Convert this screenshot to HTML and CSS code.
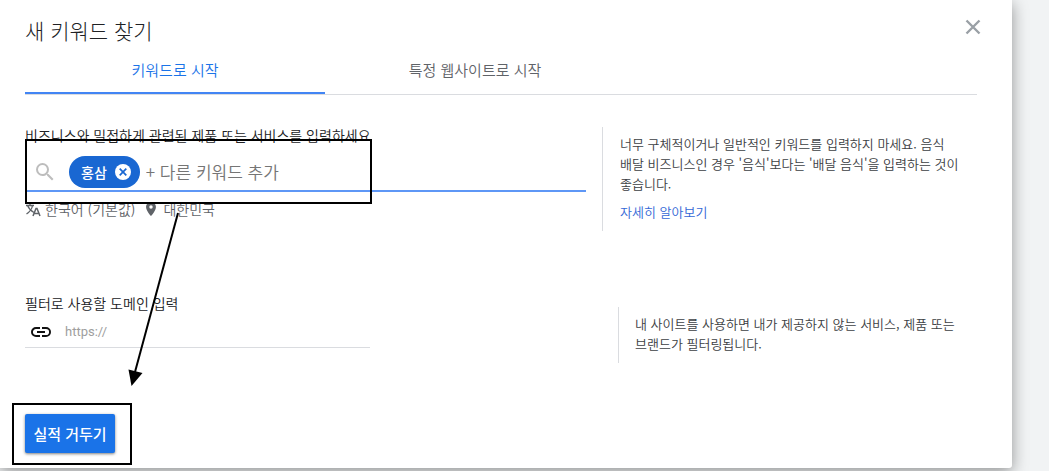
FILE: index.html
```html
<!DOCTYPE html>
<html lang="ko">
<head>
    <meta charset="UTF-8">
    <meta name="viewport" content="width=device-width, initial-scale=1.0">
    <title>새 키워드 찾기</title>
    <link rel="stylesheet" href="styles.css">
</head>
<body>
    <main class="panel">
        <header class="panel-header">
            <h1>새 키워드 찾기</h1>
            <button class="close" type="button" aria-label="닫기">
                <svg width="16" height="16" viewBox="0 0 16 16"><path d="M1.5 1.5l13 13M14.5 1.5l-13 13" fill="none" stroke="#9aa0a6" stroke-width="2.4"/></svg>
            </button>
        </header>

        <div class="tabs" role="tablist">
            <button class="tab active" type="button" role="tab" aria-selected="true">키워드로 시작</button>
            <button class="tab" type="button" role="tab" aria-selected="false">특정 웹사이트로 시작</button>
        </div>

        <section class="row">
            <div class="field">
                <label for="keyword">비즈니스와 밀접하게 관련된 제품 또는 서비스를 입력하세요</label>
                <div class="search">
                    <svg class="search-icon" width="24" height="24" viewBox="0 0 24 24" fill="#bdbdbd"><path d="M15.5 14h-.79l-.28-.27A6.471 6.471 0 0 0 16 9.500 6.500 6.500 0 1 0 9.500 16c1.610 0 3.090-.59 4.230-1.570l.27.28v.79l5 4.990L20.490 19l-4.990-5zm-6 0C7.010 14 5 11.990 5 9.500S7.010 5 9.500 5 14 7.010 14 9.500 11.990 14 9.500 14z"/></svg>
                    <span class="chip">
                        홍삼
                        <button class="chip-remove" type="button" aria-label="홍삼 삭제">
                            <svg width="16" height="16" viewBox="0 0 16 16"><circle cx="8" cy="8" r="8" fill="#fff"/><path d="M4.700 4.700l6.600 6.600M11.300 4.700l-6.600 6.600" stroke="#1967d2" stroke-width="1.700"/></svg>
                        </button>
                    </span>
                    <input class="keyword" id="keyword" type="text" placeholder="+ 다른 키워드 추가">
                    <div class="frame frame-search"></div>
                </div>
                <div class="settings">
                    <svg width="16" height="16" viewBox="0 0 16 16"><path d="M1 4.500h8M2.500 4.500C4 8 6 10 9 11.500M7.500 4.500C7 8 4.500 11 1.500 13M5 2.500v2" fill="none" stroke="#5f6368" stroke-width="1.300"/><path d="M8 15l3-7.500h1L15 15M9 12.500h5" fill="none" stroke="#5f6368" stroke-width="1.500"/></svg>
                    <span class="language">한국어 (기본값)</span>
                    <svg width="16" height="16" viewBox="0 0 24 24" fill="#5f6368"><path d="M12 1.500c-4.100 0-7.400 3.300-7.400 7.400C4.600 14.500 12 22.500 12 22.500s7.400-8 7.400-13.600c0-4.100-3.300-7.400-7.400-7.400zm0 10a2.600 2.600 0 1 1 0-5.200 2.600 2.600 0 0 1 0 5.200z"/></svg>
                    <span>대한민국</span>
                </div>
            </div>
            <aside class="help">
                <p>너무 구체적이거나 일반적인 키워드를 입력하지 마세요. 음식 배달 비즈니스인 경우 '음식'보다는 '배달 음식'을 입력하는 것이 좋습니다.</p>
                <a href="#">자세히 알아보기</a>
            </aside>
        </section>

        <section class="row">
            <div class="field">
                <label for="domain">필터로 사용할 도메인 입력</label>
                <div class="domain">
                    <svg width="24" height="24" viewBox="0 0 24 24" fill="#111"><path d="M3.900 12c0-1.710 1.390-3.100 3.100-3.100h4V7H7a5 5 0 0 0 0 10h4v-1.900H7c-1.710 0-3.100-1.390-3.100-3.100zM8 13h8v-2H8v2zm9-6h-4v1.900h4a3.100 3.100 0 0 1 0 6.200h-4V17h4a5 5 0 0 0 0-10z"/></svg>
                    <input id="domain" type="text" placeholder="https://">
                </div>
            </div>
            <aside class="help help-domain">
                <p>내 사이트를 사용하면 내가 제공하지 않는 서비스, 제품 또는 브랜드가 필터링됩니다.</p>
            </aside>
        </section>

        <div class="actions">
            <button class="submit" type="button">실적 거두기</button>
            <div class="frame frame-submit"></div>
        </div>

        <svg class="arrow" width="60" height="180" viewBox="0 0 60 180">
            <path d="M53 5L10 164" stroke="#000" stroke-width="2"/>
            <path d="M3.500 161.500L17.500 165 6.500 178z"/>
        </svg>
    </main>
</body>
</html>
```

FILE: styles.css
```css
* {
    box-sizing: border-box;
}
body {
    margin: 0;
    background-color: #f1f3f4;
    font-family: "Noto Sans CJK KR", sans-serif;
    font-size: 14px;
    font-weight: 350;
    line-height: 20px;
    word-break: keep-all;
    color: #202124;
}
button,
input {
    padding: 0;
    border: none;
    background: none;
    font-family: inherit;
    font-weight: inherit;
}
button {
    cursor: pointer;
}
input {
    flex: 1;
    min-width: 0;
    outline: none;
}
svg {
    display: block;
    flex: none;
}
.panel {
    position: relative;
    margin: 0 37px 3px 0;
    padding: 0 35px 15px 25px;
    background-color: #fff;
    border-radius: 0 0 3px 0;
    box-shadow: 0 4px 16px rgba(0, 0, 0, 0.4);
}
.panel-header {
    display: flex;
    justify-content: space-between;
    align-items: center;
    height: 47px;
    padding-top: 12px;
}
h1 {
    margin: 0;
    font-size: 21px;
    line-height: 32px;
    font-weight: 300;
}
.close {
    width: 24px;
    height: 24px;
    margin: -6px -8px 0 0;
    display: grid;
    place-items: center;
}
.tabs {
    display: flex;
    height: 48px;
    border-bottom: 1px solid #dadce0;
}
.tab {
    flex: 0 1 300px;
    border-bottom: 2px solid transparent;
    font-size: 15px;
    color: #5f6368;
}
.tab.active {
    color: #1a73e8;
    border-bottom-color: #4285f4;
}
.row {
    display: grid;
    grid-template-columns: 1fr 375px;
    gap: 16px;
    margin-top: 30px;
}
.row + .row {
    margin-top: 62px;
}
.field label {
    display: block;
}
.search {
    position: relative;
    display: flex;
    align-items: center;
    height: 47px;
    padding: 8px 0 0 8px;
    border-bottom: 2px solid #5e97f6;
}
.search-icon {
    margin-right: 12px;
}
.chip {
    display: flex;
    align-items: center;
    gap: 8px;
    height: 32px;
    margin-right: 6px;
    padding: 0 9px 0 12px;
    border-radius: 16px;
    background-color: #1967d2;
    color: #fff;
    font-weight: 500;
}
.keyword {
    font-size: 17px;
}
.keyword::placeholder {
    color: #757575;
}
.settings {
    display: flex;
    align-items: center;
    gap: 4px;
    margin-top: 7px;
    color: #5f6368;
}
.language {
    margin-right: 4px;
}
.help {
    align-self: start;
    margin-top: 2px;
    padding: 7px 17px 9px;
    border-left: 1px solid #dadce0;
    font-size: 13px;
    color: #3c4043;
}
.help p {
    margin: 0;
}
.help a {
    display: block;
    margin-top: 8px;
    color: #3367d6;
    text-decoration: none;
}
.help-domain {
    margin: 14px 0 0 16px;
    padding-left: 16px;
}
.domain {
    display: flex;
    align-items: center;
    gap: 12px;
    max-width: 345px;
    height: 35px;
    padding: 3px 0 0 4px;
    border-bottom: 1px solid #dadce0;
}
.domain input {
    font-family: Roboto, sans-serif;
    font-size: 13px;
    font-weight: 400;
}
.domain input::placeholder {
    color: #9e9e9e;
}
.actions {
    position: relative;
    margin-top: 51px;
}
.submit {
    display: block;
    min-width: 90px;
    height: 39px;
    padding: 0 8px;
    border-radius: 2px;
    background-color: #1a73e8;
    box-shadow: 0 1px 3px rgba(0, 0, 0, 0.5);
    color: #fff;
    font-size: 15px;
    font-weight: 500;
}
/* marks drawn over the form */
.frame {
    position: absolute;
    border: 2px solid #000;
    pointer-events: none;
}
.frame-search {
    top: -6px;
    left: 0;
    width: 347px;
    height: 65px;
}
.frame-submit {
    top: -11px;
    left: -13px;
    width: 120px;
    height: 62px;
}
.arrow {
    position: absolute;
    top: 208px;
    left: 125px;
    pointer-events: none;
}
```
